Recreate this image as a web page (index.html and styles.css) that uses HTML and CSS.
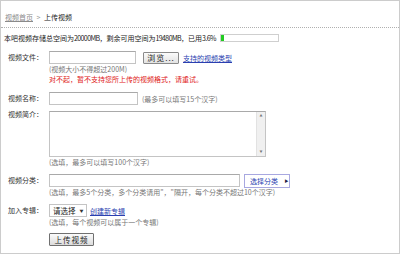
FILE: index.html
```html
<!DOCTYPE html>
<html lang="zh-CN">

<head>
    <meta charset="UTF-8">
    <meta name="viewport" content="width=device-width, initial-scale=1.0">
    <title>上传视频</title>
    <link rel="stylesheet" href="styles.css">
</head>

<body>
    <div class="page">
        <div class="crumb">
            <a href="#" class="crumb-link">视频首页</a>
            <span class="crumb-sep">&gt;</span>
            <span class="crumb-cur">上传视频</span>
        </div>

        <div class="space">
            本吧视频存储总空间为<span class="num">20000MB</span>，剩余可用空间为<span class="num">19480MB</span>，已用<span class="num">3.6%</span>
            <span class="bar"><span class="bar-fill" style="width: 3.6%"></span></span>
        </div>

        <div class="form">
            <!-- file -->
            <div class="row row-file">
                <div class="label">视频文件：</div>
                <div class="field">
                    <div class="line">
                        <input type="text" class="txt txt-file">
                        <button class="btn-browse">浏览...</button>
                        <a href="#" class="link">支持的视频类型</a>
                    </div>
                    <div class="hint">(视频大小不得超过200M)</div>
                    <div class="error">对不起，暂不支持您所上传的视频格式，请重试。</div>
                </div>
            </div>

            <!-- name -->
            <div class="row row-name">
                <div class="label">视频名称：</div>
                <div class="field">
                    <div class="line">
                        <input type="text" class="txt txt-name">
                        <span class="hint">(最多可以填写15个汉字)</span>
                    </div>
                </div>
            </div>

            <!-- intro -->
            <div class="row row-intro">
                <div class="label label-top">视频简介：</div>
                <div class="field">
                    <div class="area">
                        <textarea class="area-text"></textarea>
                        <div class="scroll">
                            <span class="arrow">▲</span>
                            <span class="arrow">▼</span>
                        </div>
                    </div>
                    <div class="hint">(选填，最多可以填写100个汉字)</div>
                </div>
            </div>

            <!-- category -->
            <div class="row row-cat">
                <div class="label">视频分类：</div>
                <div class="field">
                    <div class="line">
                        <input type="text" class="txt txt-cat">
                        <button class="btn-cat">选择分类 <span class="tri">▶</span></button>
                    </div>
                    <div class="hint">(选填，最多5个分类，多个分类请用"，"隔开，每个分类不超过10个汉字)</div>
                </div>
            </div>

            <!-- album -->
            <div class="row row-album">
                <div class="label">加入专辑：</div>
                <div class="field">
                    <div class="line">
                        <span class="select">请选择 <span class="caret">▼</span></span>
                        <a href="#" class="link link-album">创建新专辑</a>
                    </div>
                    <div class="hint">(选填，每个视频可以属于一个专辑)</div>
                    <button class="btn-upload">上传视频</button>
                </div>
            </div>
        </div>
    </div>
</body>

</html>
```

FILE: styles.css
```css
body {
    margin: 0;
    background-color: #ffffff;
    font-family: "Noto Sans CJK SC", "DejaVu Sans", sans-serif;
    font-size: 7px;
    color: #333333;
}

.page {
    width: 400px;
    height: 254px;
    box-sizing: border-box;
    border: 1px solid #cccccc;
}

/* breadcrumb */
.crumb {
    height: 27px;
    box-sizing: border-box;
    padding: 12px 0 0 4px;
    line-height: 8px;
    border-bottom: 1px dotted #b0b0b0;
}

.crumb-link {
    color: #8a8a8a;
}

.crumb-sep {
    color: #999999;
    margin: 0 2px;
}

.crumb-cur {
    color: #222222;
}

/* storage */
.space {
    margin-top: 6px;
    padding-left: 3px;
    line-height: 8px;
    color: #222222;
    display: flex;
    align-items: center;
}

.num {
    letter-spacing: -0.6px;
}

.bar {
    display: inline-block;
    width: 57px;
    height: 6px;
    margin-left: 4px;
    border: 1px solid #cfcfcf;
    background-color: #ffffff;
}

.bar-fill {
    display: block;
    height: 100%;
    min-width: 3px;
    background-color: #22cc22;
}

/* form */
.form {
    padding: 9px 0 0 7px;
}

.row {
    display: flex;
}

.label {
    width: 41px;
    flex-shrink: 0;
    line-height: 13px;
    color: #333333;
}

.label-top {
    line-height: 7px;
}

.field {
    display: flex;
    flex-direction: column;
    align-items: flex-start;
}

.line {
    display: flex;
    align-items: center;
    height: 13px;
}

.row-name {
    margin-top: 8px;
}

.row-intro {
    margin-top: 6px;
}

.row-cat {
    margin-top: 7px;
}

.row-album {
    margin-top: 7px;
}

.txt {
    height: 13px;
    box-sizing: border-box;
    border: 1px solid #c4c4c4;
    border-top-color: #a9a9a9;
    padding: 0;
    margin: 0;
    background: #ffffff;
}

.txt-file {
    width: 87px;
}

.txt-name {
    width: 89px;
    margin-right: 4px;
}

.txt-cat {
    width: 191px;
}

.hint {
    line-height: 10px;
    color: #777777;
}

.error {
    line-height: 10px;
    color: #e02020;
}

.link {
    color: #2b3fb0;
    text-decoration: underline;
}

.btn-browse {
    width: 36px;
    height: 12px;
    margin: 0 4px 0 7px;
    padding: 0;
    font-family: inherit;
    font-size: 8px;
    line-height: 10px;
    color: #222222;
    border: 1px solid #8a8a8a;
    border-radius: 1px;
    background: linear-gradient(#fbfbfb, #e2e2e2);
    letter-spacing: 1px;
}

/* textarea with thin scrollbar */
.area {
    display: flex;
    width: 217px;
    height: 46px;
    box-sizing: border-box;
    border: 1px solid #c4c4c4;
    border-top-color: #a9a9a9;
}

.area-text {
    flex: 1;
    border: none;
    margin: 0;
    padding: 0;
    resize: none;
    outline: none;
}

.scroll {
    width: 8px;
    background-color: #f0f0f0;
    border-left: 1px solid #e2e2e2;
    display: flex;
    flex-direction: column;
    justify-content: space-between;
    align-items: center;
    padding: 2px 0;
}

.arrow {
    font-size: 3px;
    line-height: 4px;
    color: #777777;
}

.btn-cat {
    height: 14px;
    width: 46px;
    margin-left: 4px;
    padding: 0 0 0 5px;
    text-align: left;
    font-family: inherit;
    font-size: 7px;
    color: #2b3fb0;
    border: 1px solid #a8a8e0;
    background-color: #ffffff;
}

.tri {
    font-size: 4px;
    color: #222244;
    margin-left: 5px;
    vertical-align: 1px;
}

.select {
    display: inline-flex;
    align-items: center;
    width: 38px;
    height: 13px;
    box-sizing: border-box;
    padding-left: 3px;
    border: 1px solid #c4c4c4;
    font-size: 7.5px;
    color: #222222;
}

.caret {
    font-size: 4px;
    margin-left: 4px;
    color: #333333;
}

.link-album {
    margin-left: 3px;
}

.btn-upload {
    width: 45px;
    height: 13px;
    margin-top: 6px;
    padding: 0;
    font-family: inherit;
    font-size: 7.5px;
    line-height: 11px;
    color: #222222;
    letter-spacing: 1px;
    border: 1px solid #707070;
    border-radius: 1px;
    background: linear-gradient(#fbfbfb, #dcdcdc);
}
```
